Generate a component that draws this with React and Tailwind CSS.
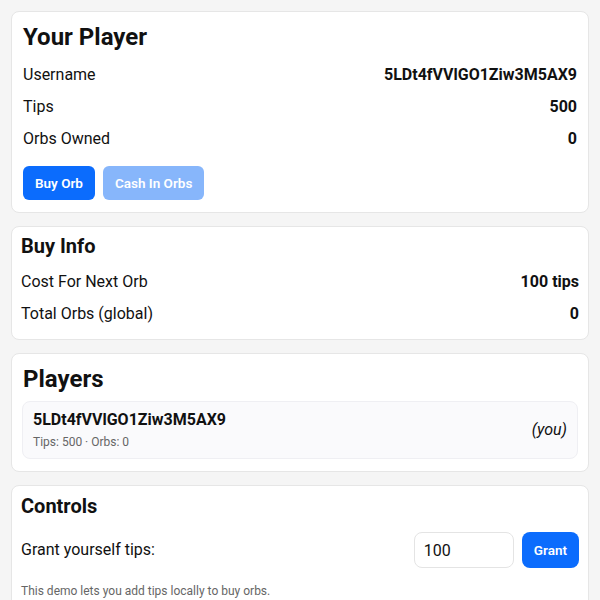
const Row = ({ label, value }) => (
  <div className="flex items-center justify-between h-6 text-base">
    <span>{label}</span>
    <span className="font-bold">{value}</span>
  </div>
)

export default function App() {
  const name = "5LDt4fVVlGO1Ziw3M5AX9"
  return (
    <div
      className="min-h-[600px] bg-[#f5f5f5] p-[11px] flex flex-col gap-[13px] text-[#111]"
      style={{ fontFamily: "Roboto, 'Noto Sans', sans-serif" }}
    >
      {/* Your Player */}
      <div className="bg-white rounded-lg border border-[#e6e6e6] px-[11px] pt-[11px] pb-[12px]">
        <h1 className="text-2xl font-bold leading-7 mb-[12px]">Your Player</h1>
        <div className="flex flex-col gap-2">
          <Row label="Username" value={name} />
          <Row label="Tips" value="500" />
          <Row label="Orbs Owned" value="0" />
        </div>
        <div className="flex gap-2 mt-[15px]">
          <button className="h-[34px] px-3 rounded-md bg-[#0b6cfd] text-white text-[13.5px] font-semibold">Buy Orb</button>
          <button className="h-[34px] px-3 rounded-md bg-[#87b6fb] text-white text-[13.5px] font-semibold">Cash In Orbs</button>
        </div>
      </div>

      {/* Buy Info */}
      <div className="bg-white rounded-lg border border-[#e6e6e6] px-[9px] pt-[7px] pb-[13px]">
        <h2 className="text-xl font-bold leading-6 mb-[12px]">Buy Info</h2>
        <div className="flex flex-col gap-2">
          <Row label="Cost For Next Orb" value="100 tips" />
          <Row label="Total Orbs (global)" value="0" />
        </div>
      </div>

      {/* Players */}
      <div className="bg-white rounded-lg border border-[#e6e6e6] px-[10px] pt-[11px] pb-[12px]">
        <h2 className="text-2xl font-bold leading-7 mb-2 px-[1px]">Players</h2>
        <div className="flex items-center justify-between rounded-lg border border-[#efeff3] bg-[#fafafc] px-[10px] h-[58px]">
          <div className="flex flex-col">
            <span className="text-base font-bold leading-5">{name}</span>
            <span className="text-xs text-[#666] leading-4 mt-1">Tips: 500 · Orbs: 0</span>
          </div>
          <span className="italic text-base">(you)</span>
        </div>
      </div>

      {/* Controls */}
      <div className="bg-white rounded-lg border border-[#e6e6e6] px-[9px] pt-[8px] pb-4">
        <h2 className="text-xl font-bold leading-6 mb-[14px]">Controls</h2>
        <div className="flex items-center justify-between">
          <span className="text-base">Grant yourself tips:</span>
          <div className="flex items-center gap-2">
            <input
              defaultValue="100"
              className="w-[100px] h-9 rounded-lg border border-[#e4e4e4] px-[9px] text-base outline-none"
            />
            <button className="h-9 px-3 rounded-lg bg-[#0b6cfd] text-white text-[13.5px] font-semibold">Grant</button>
          </div>
        </div>
        <p className="text-xs text-[#666] mt-[15px]">This demo lets you add tips locally to buy orbs.</p>
      </div>
    </div>
  )
}
